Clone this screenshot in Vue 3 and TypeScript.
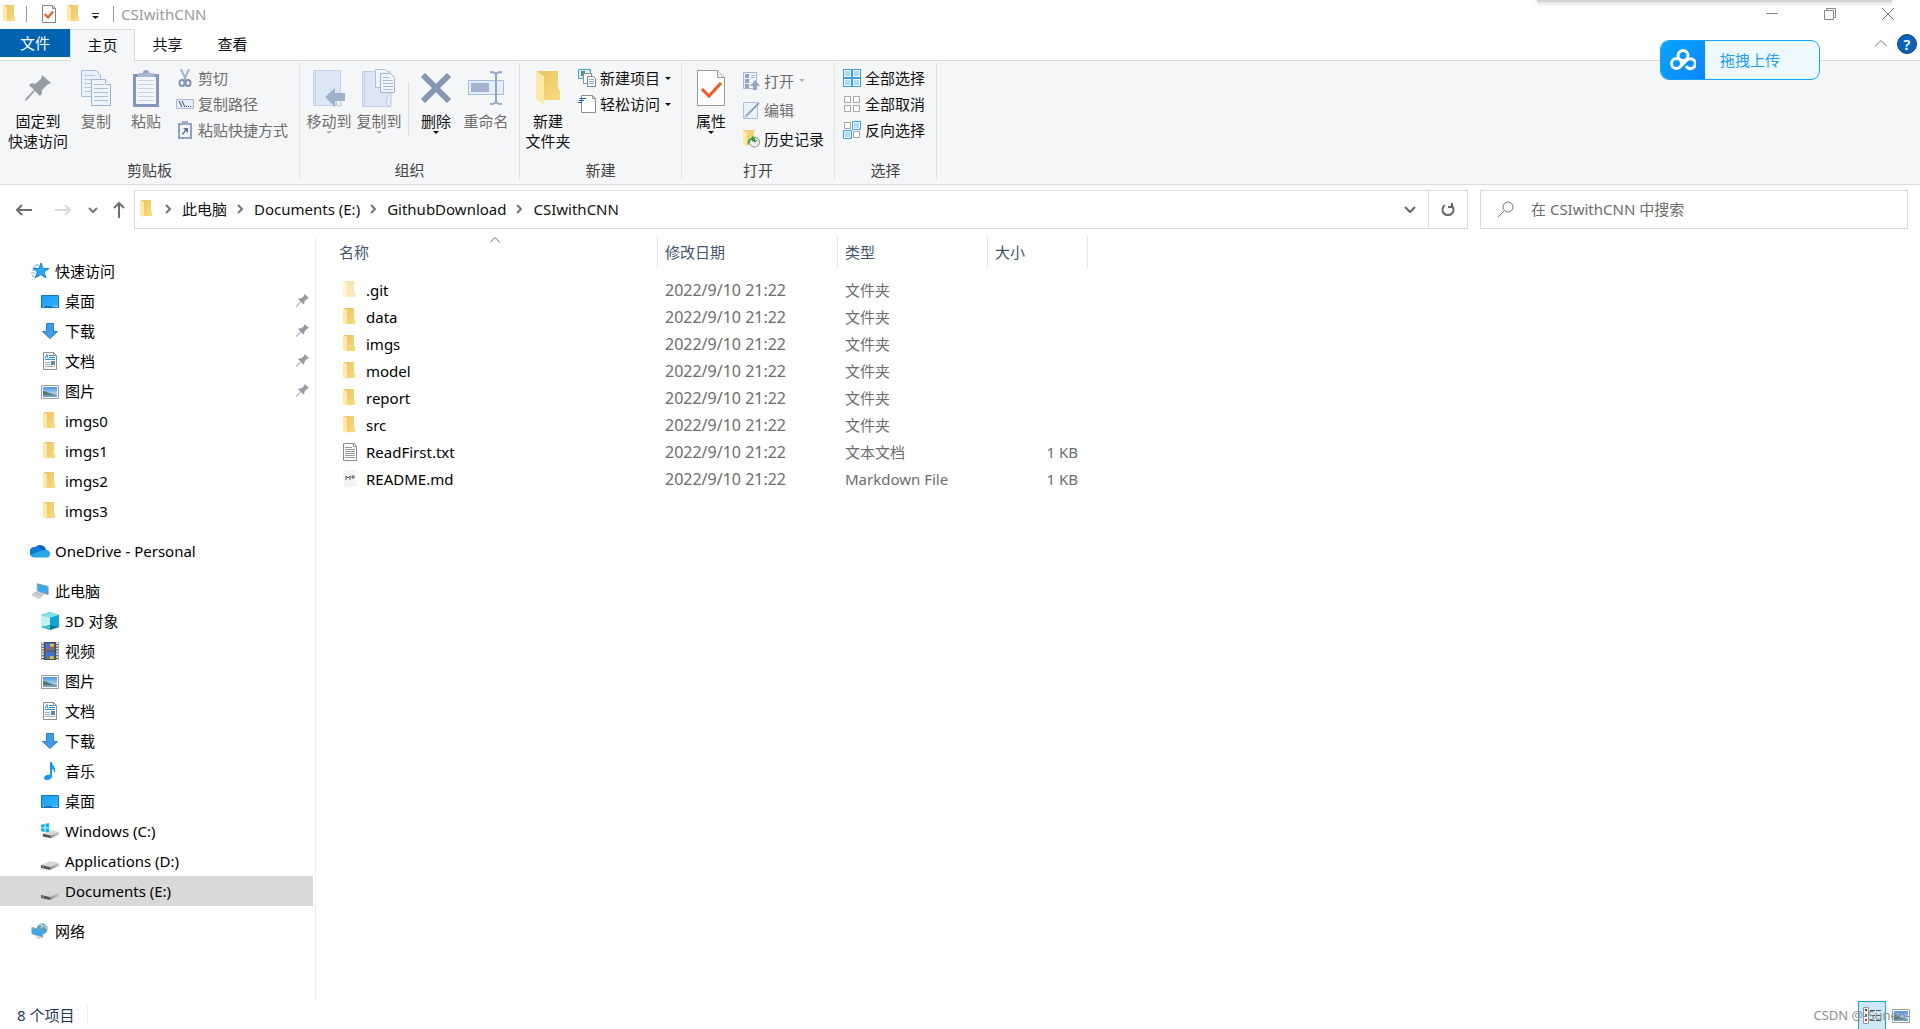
<script setup lang="ts">
import { ref } from 'vue'

interface NavItem {
  label: string
  icon: string
  root?: boolean
  gap?: boolean
  pinned?: boolean
  selected?: boolean
}
interface FileRow {
  name: string
  icon: string
  type: string
  size: string
  hidden?: boolean
}

const tabs = ['文件', '主页', '共享', '查看']
const crumbs = ['此电脑', 'Documents (E:)', 'GithubDownload', 'CSIwithCNN']
const query = ref('')
const modified = '2022/9/10 21:22'

const nav: NavItem[] = [
  { label: '快速访问', icon: 'star', root: true },
  { label: '桌面', icon: 'desktop', pinned: true },
  { label: '下载', icon: 'download', pinned: true },
  { label: '文档', icon: 'document', pinned: true },
  { label: '图片', icon: 'picture', pinned: true },
  { label: 'imgs0', icon: 'folder' },
  { label: 'imgs1', icon: 'folder' },
  { label: 'imgs2', icon: 'folder' },
  { label: 'imgs3', icon: 'folder' },
  { label: 'OneDrive - Personal', icon: 'onedrive', root: true, gap: true },
  { label: '此电脑', icon: 'computer', root: true, gap: true },
  { label: '3D 对象', icon: 'cube' },
  { label: '视频', icon: 'video' },
  { label: '图片', icon: 'picture' },
  { label: '文档', icon: 'document' },
  { label: '下载', icon: 'download' },
  { label: '音乐', icon: 'music' },
  { label: '桌面', icon: 'desktop' },
  { label: 'Windows (C:)', icon: 'windrive' },
  { label: 'Applications (D:)', icon: 'drive' },
  { label: 'Documents (E:)', icon: 'drive', selected: true },
  { label: '网络', icon: 'network', root: true, gap: true },
]

const files: FileRow[] = [
  { name: '.git', icon: 'folder', type: '文件夹', size: '', hidden: true },
  { name: 'data', icon: 'folder', type: '文件夹', size: '' },
  { name: 'imgs', icon: 'folder', type: '文件夹', size: '' },
  { name: 'model', icon: 'folder', type: '文件夹', size: '' },
  { name: 'report', icon: 'folder', type: '文件夹', size: '' },
  { name: 'src', icon: 'folder', type: '文件夹', size: '' },
  { name: 'ReadFirst.txt', icon: 'text', type: '文本文档', size: '1 KB' },
  { name: 'README.md', icon: 'markdown', type: 'Markdown File', size: '1 KB' },
]
</script>

<template>
  <div class="window">
    <svg class="sprite" aria-hidden="true">
      <defs>
        <linearGradient id="g-fold" x1="0" y1="0" x2="1" y2="1">
          <stop offset="0" stop-color="#e9c261" /><stop offset="1" stop-color="#fbdc7f" />
        </linearGradient>
        <linearGradient id="g-sky" x1="0" y1="0" x2="0" y2="1">
          <stop offset="0" stop-color="#4b94e6" /><stop offset="1" stop-color="#d8eefa" />
        </linearGradient>
        <linearGradient id="g-drive" x1="0" y1="0" x2="1" y2="0">
          <stop offset="0" stop-color="#8d8e90" /><stop offset="1" stop-color="#c9cacc" />
        </linearGradient>
        <linearGradient id="g-screen" x1="0" y1="0" x2="1" y2="1">
          <stop offset="0" stop-color="#1b9bf5" /><stop offset="1" stop-color="#35b4ff" />
        </linearGradient>
      </defs>
      <symbol id="i-folder" viewBox="0 0 18 18">
        <path d="M3 0h10v11l1 1v4H5z" fill="url(#g-fold)" />
        <path d="M2 0l4 2v15L2 15z" fill="#ffe9a6" />
      </symbol>
      <symbol id="i-bigfolder" viewBox="0 0 24 34">
        <path d="M1 0h21v17l2 3v9H8z" fill="url(#g-fold)" />
        <path d="M0 0l8 5v29l-8-6z" fill="#ffe9a6" />
      </symbol>
      <symbol id="i-star" viewBox="0 0 18 18">
        <path d="M10 1l2 5.500h6l-5 3.500 2 6-5-3.500L4 16l2.500-6L2 6.500h6z" fill="#2aa4f4" stroke="#1684cf" />
        <path d="M4 3h4M2 5h3M1 8h4M0 11h4M1 14h2" stroke="#63b7ee" />
      </symbol>
      <symbol id="i-desktop" viewBox="0 0 18 18">
        <path d="M.500 3.500h17v12H.500z" fill="url(#g-screen)" stroke="#0f76c4" />
        <path d="M1 14.500h10" stroke="#1678bd" /><path d="M2 14.500h1M13 14.500h1M15 14.500h1" stroke="#fff" />
      </symbol>
      <symbol id="i-download" viewBox="0 0 18 18">
        <path d="M5.500 1.500h7v8h4L9 16.500 1.500 9.500h4z" fill="#3d9bea" stroke="#2a7fcb" />
      </symbol>
      <symbol id="i-document" viewBox="0 0 18 18">
        <path d="M2.500.500h10l3 3v14h-13z" fill="#fdfdfd" stroke="#8b8f92" />
        <path d="M12.500.500v3h3" fill="none" stroke="#8b8f92" />
        <path d="M4 6.500l2-4 1 4M8 3.500h4M8 5.500h6M4 7.500h10" fill="none" stroke="#2b93d6" />
        <path d="M4 10.500h5M4 12.500h5M4 14.500h10" stroke="#a4abb0" /><path d="M10 9h4v4h-4z" fill="#4f8fb6" />
      </symbol>
      <symbol id="i-picture" viewBox="0 0 18 18">
        <path d="M.500 3.500h17v13H.500z" fill="#fff" stroke="#9a9ea2" />
        <path d="M2 5h14v10H2z" fill="url(#g-sky)" />
        <path d="M2 9c4 0 6 3 14 4v1H2z" fill="#4d7d74" /><path d="M2 13h14v2H2z" fill="#6f9fc0" />
      </symbol>
      <symbol id="i-onedrive" viewBox="0 0 20 18">
        <path d="M5 6a6 6 0 0 1 11 2l-5 5z" fill="#0364b8" />
        <path d="M5 5a6 6 0 0 1 5 1l7 5-6 4H4A5 5 0 0 1 5 5z" fill="#0f78d4" />
        <path d="M15 8a4 4 0 0 1 5 4c0 2-1 3.500-3 3.500H4c-2 0-3-1-3.500-2.500L10 9z" fill="#28a8ea" />
      </symbol>
      <symbol id="i-computer" viewBox="0 0 20 18">
        <path d="M7 1l12 3v9L7 9z" fill="#3ba9f0" stroke="#8a949b" />
        <path d="M5 10l9 3-2 1-8-3zM1 13l4-1 7 3-4 2z" fill="#d3d8dc" stroke="#b4bac0" />
      </symbol>
      <symbol id="i-cube" viewBox="0 0 18 18">
        <path d="M9 0l9 3v12l-9 3-9-3V3z" fill="#1ba9c9" />
        <path d="M9 0l9 3-9 3-9-3z" fill="#7fe0e8" /><path d="M0 3l9 3v7l-9 2z" fill="#c3f1f0" />
        <path d="M9 6l9-3v12l-9-2z" fill="#12a5d8" /><path d="M0 15l9-2v5z" fill="#36c2cf" /><path d="M18 15l-9-2v5z" fill="#067a96" />
      </symbol>
      <symbol id="i-video" viewBox="0 0 18 19">
        <path d="M0 0h18v19H0z" fill="#4b4b4b" />
        <path d="M1.500 0v19M16.500 0v19" stroke="#e6e6e6" stroke-width="2" stroke-dasharray="2 1" />
        <path d="M4 1h10v8H4zM4 10h10v8H4z" fill="#3f74d0" />
        <path d="M9 2h4v3H9zM9 15h4v3H9z" fill="#e6c62e" /><path d="M4 7h4v2H4zM9 5h4v2H9z" fill="#d14a34" />
        <path d="M9 7h4v2H9zM6 16h3v2H6z" fill="#3a9a53" />
      </symbol>
      <symbol id="i-music" viewBox="0 0 18 18">
        <path d="M9 0h2c0 4 4 4 3 10l-1 1c0-3-1-4-2-4v7c0 3-3 4-5 4s-3-1-3-2c0-2 3-4 6-3z" fill="#109bf0" />
      </symbol>
      <symbol id="i-drive" viewBox="0 0 18 18">
        <path d="M0 13l9-4 9 2-9 4z" fill="#d6d7d9" />
        <path d="M0 13l9 2v3l-9-2z" fill="#555" /><path d="M9 15l9-4v3l-9 4z" fill="url(#g-drive)" />
        <path d="M1 14l2 1v1l-2-1z" fill="#5fbf78" />
      </symbol>
      <symbol id="i-windrive" viewBox="0 0 20 18">
        <path d="M2 12l9-4 9 2-9 4z" fill="#d6d7d9" />
        <path d="M2 12l9 2v3l-9-2z" fill="#555" /><path d="M11 14l9-4v3l-9 4z" fill="url(#g-drive)" />
        <path d="M0 2l4-1v4H0zM5 1l4-1v5H5zM0 6h4v4l-4-1zM5 6h4v4H5z" fill="#14b1ef" />
      </symbol>
      <symbol id="i-network" viewBox="0 0 20 18">
        <circle cx="12.500" cy="6.500" r="6" fill="#5a9fb9" />
        <path d="M9 3c2-2 3-1 4 0s-2 2-2 3M15 2c2 2 0 3 3 5" fill="none" stroke="#a5d0db" stroke-width="2" />
        <path d="M1 5l12 3v8L1 12z" fill="#39a8ee" stroke="#8fa3af" />
        <path d="M6 15l6 2-3 1-4-2z" fill="#c4cace" />
      </symbol>
      <symbol id="i-text" viewBox="0 0 18 18">
        <path d="M2.500.500h11l2 3v14h-13z" fill="#fff" stroke="#8d8d8d" /><path d="M12.500.500v3h3" fill="none" stroke="#8d8d8d" />
        <path d="M4 4.500h7M4 6.500h10M4 8.500h10M4 10.500h10M4 12.500h10M4 14.500h10" stroke="#9a9a9a" />
      </symbol>
      <symbol id="i-markdown" viewBox="0 0 18 18">
        <path d="M2 1l12-1 2 16-13 2z" fill="#f3f3f3" />
        <path d="M5 10V6l2 2 2-2v4M12 5v4M10 7h4" fill="none" stroke="#555" />
      </symbol>
      <symbol id="i-pin" viewBox="0 0 26 26">
        <path d="M17 0l9 8-4 2-5 5c0 3 0 4-2 6l-5-5-8 9-2 1 1-3 8-8-5-5c2-2 4-2 6-1l6-5z" fill="#949da4" />
      </symbol>
      <symbol id="i-page" viewBox="0 0 30 37">
        <path d="M.500.500h15l4 5v21H.500z" fill="#e9f1fb" stroke="#a9bcd8" />
        <path d="M3 5.500h11M3 9.500h14M3 13.500h14M3 17.500h14M3 21.500h14" stroke="#b7c8e0" />
        <path d="M10.500 9.500h14l5 5v21h-19z" fill="#eef4fc" stroke="#9fb3d2" /><path d="M24.500 9.500v5h5" fill="#fff" stroke="#9fb3d2" />
        <path d="M13 14.500h10M13 18.500h14M13 22.500h14M13 26.500h14M13 30.500h14" stroke="#a9bcd8" />
      </symbol>
      <symbol id="i-paste" viewBox="0 0 26 37">
        <path d="M0 4h26v33H0z" fill="#8396bb" /><path d="M3 7h20v27H3z" fill="#f2f7fd" />
        <circle cx="13" cy="3" r="3" fill="#8fa2c4" /><path d="M6 3h14l2 4H4z" fill="#a8b8d2" />
        <path d="M5 10.500h16M5 14.500h16M5 18.500h16M5 22.500h16M5 26.500h16M5 30.500h16" stroke="#c6d4e8" />
      </symbol>
      <symbol id="i-cut" viewBox="0 0 18 18">
        <path d="M5 0l5 11M13 0L8 11" stroke="#a3b3cc" stroke-width="2" />
        <ellipse cx="6" cy="14" rx="2.500" ry="3" fill="none" stroke="#7f93b8" stroke-width="2" />
        <ellipse cx="12" cy="14" rx="2.500" ry="3" fill="none" stroke="#7f93b8" stroke-width="2" />
      </symbol>
      <symbol id="i-path" viewBox="0 0 18 18">
        <path d="M.500 4.500h17v9H.500z" fill="#e3edf8" stroke="#a9bad3" />
        <path d="M3 6l3 6M6 6l3 6M10 11.500h1M12 11.500h1M14 11.500h1" stroke="#3d4f73" />
      </symbol>
      <symbol id="i-shortcut" viewBox="0 0 18 18">
        <path d="M2 2h14v16H2z" fill="#8fa2c4" /><path d="M4 4h10v12H4z" fill="#f0f5fb" /><path d="M6 0h6v4H6z" fill="#9aabca" />
        <path d="M7 7h5v5l-2-2-3 4-1-1 3-4z" fill="#5672a3" />
      </symbol>
      <symbol id="i-moveto" viewBox="0 0 32 37">
        <path d="M.500.500h27v35H.500z" fill="#dde6f4" stroke="#c3d1e6" /><path d="M2.500 1v35" stroke="#c3d1e6" /><path d="M25 28c-2 2-2 8 0 8h3V25z" fill="#e9f0fa" stroke="#b7c7df" />
        <path d="M12 27l10-9v5h10v8H22v6z" fill="#9fb0cc" />
      </symbol>
      <symbol id="i-copyto" viewBox="0 0 34 38">
        <path d="M.500 2.500h28v35H.500z" fill="#dde6f4" stroke="#c3d1e6" /><path d="M2.500 3v34" stroke="#c3d1e6" /><path d="M26 27c-2 2-2 10 0 10h3V24z" fill="#e9f0fa" stroke="#b7c7df" />
        <path d="M13.500.500h10l4 4v14h-14z" fill="#eef4fb" stroke="#b3c3dc" />
        <path d="M18.500 4.500h10l4 4v15h-14z" fill="#f1f6fc" stroke="#a0b3d0" />
        <path d="M21 8.500h6M21 11.500h10M21 14.500h10M21 17.500h10M21 20.500h10" stroke="#a9bad5" />
      </symbol>
      <symbol id="i-delete" viewBox="0 0 32 32">
        <path d="M3 3l26 26M29 3L3 29" stroke="#8495b5" stroke-width="6" />
      </symbol>
      <symbol id="i-rename" viewBox="0 0 36 34">
        <path d="M.500 9.500h35v14H.500z" fill="#e6eefa" stroke="#a9bcda" /><path d="M3 12h18v9H3z" fill="#a3b3d0" />
        <path d="M22 1c4 0 6 1 6 3 0-2 2-3 6-3M28 3v28M22 33c4 0 6-1 6-3 0 2 2 3 6 3" fill="none" stroke="#93a5c6" stroke-width="2" />
      </symbol>
      <symbol id="i-newitem" viewBox="0 0 18 18">
        <path d="M.500.500h12v9H.500z" fill="#d9f0fa" stroke="#4aa2bf" /><path d="M3 2h4v5H3z" fill="#4b8b88" />
        <path d="M5.500 4.500h8v10h-8z" fill="#f7f7f7" stroke="#8b8b8b" />
        <path d="M9.500 7.500h6l2 2v8h-8z" fill="#fff" stroke="#7a8794" /><path d="M11 10.500h5M11 12.500h5M11 14.500h5" stroke="#7fb0e6" />
      </symbol>
      <symbol id="i-easy" viewBox="0 0 18 18">
        <path d="M3.500.500h11l3 3v14h-14z" fill="#fff" stroke="#8e8e8e" /><path d="M14.500.500v3h3" fill="none" stroke="#8e8e8e" />
        <path d="M2 3.500h6M1 5.500h5M0 7.500h4" stroke="#1464b4" />
      </symbol>
      <symbol id="i-props" viewBox="0 0 28 36">
        <path d="M.500.500h20l7 7v28H.500z" fill="#fdfdfd" stroke="#9a9a9a" /><path d="M20.500.500v7h7" fill="#ececec" stroke="#9a9a9a" />
        <path d="M5 19l7 7 12-13" fill="none" stroke="#f0591b" stroke-width="3" />
      </symbol>
      <symbol id="i-miniprops" viewBox="0 0 18 18">
        <path d="M2.500.500h10l3 3v14h-13z" fill="#fdfdfd" stroke="#848484" /><path d="M12.500.500v3h3" fill="none" stroke="#848484" />
        <path d="M4.500 9l3.500 3.500 5-6" fill="none" stroke="#f0591b" stroke-width="2" />
      </symbol>
      <symbol id="i-open" viewBox="0 0 18 18">
        <path d="M1.500.500h13v16h-13z" fill="#eef4fb" stroke="#a6b8d4" />
        <path d="M3 2h4v4H3zM3 7h4v4H3zM3 12h4v4H3z" fill="#8fa4c8" /><path d="M9 3.500h4M9 5.500h4" stroke="#a6b8d4" />
        <path d="M13 8l5 6h-3v4h-4v-4H8z" fill="#93a6c7" />
      </symbol>
      <symbol id="i-edit" viewBox="0 0 18 18">
        <path d="M1.500 1.500h14v16h-14z" fill="#eaf1fa" stroke="#b0c0d9" /><path d="M4 15L17 2" stroke="#8ea3c5" stroke-width="2" /><path d="M2 17l1-4 3 3z" fill="#c1cde0" />
      </symbol>
      <symbol id="i-history" viewBox="0 0 18 18">
        <path d="M1 0h11v15H4z" fill="#f3d172" /><path d="M1 0l4 3v14l-4-2z" fill="#ffe9a6" />
        <circle cx="12.500" cy="12" r="5" fill="#efefef" stroke="#8b8b8b" /><path d="M12.500 9v3l3-2" fill="none" stroke="#555" />
        <path d="M6 16c-1-5 0-7 4-8V6l4 3-4 3v-2c-3 0-3 2-4 6z" fill="#2f9e35" />
      </symbol>
      <symbol id="i-selall" viewBox="0 0 18 18">
        <path d="M0 0h18v18H0z" fill="#3e9fe2" />
        <path d="M1 1h7v7H1zM10 1h7v7h-7zM1 10h7v7H1zM10 10h7v7h-7z" fill="#e6f5fe" />
        <path d="M2 2h5v5H2zM11 2h5v5h-5zM2 11h5v5H2zM11 11h5v5h-5z" fill="#aaddfb" />
      </symbol>
      <symbol id="i-selnone" viewBox="0 0 18 18">
        <path d="M1.500 1.500h6v6h-6zM10.500 1.500h6v6h-6zM1.500 10.500h6v6h-6zM10.500 10.500h6v6h-6z" fill="#fff" stroke="#a3a3a3" />
      </symbol>
      <symbol id="i-selinv" viewBox="0 0 18 18">
        <path d="M1.500 1.500h6v6h-6zM10.500 10.500h6v6h-6z" fill="#fff" stroke="#a3a3a3" />
        <path d="M9.500.500h8v8h-8zM.500 9.500h8v8h-8z" fill="#e6f5fe" stroke="#3e9fe2" />
        <path d="M11 2h5v5h-5zM2 11h5v5H2z" fill="#aaddfb" />
      </symbol>
      <symbol id="i-caret" viewBox="0 0 6 3"><path d="M0 0h6L3 3z" fill="currentColor" /></symbol>
      <symbol id="i-chev" viewBox="0 0 6 10"><path d="M1 1l4 4-4 4" fill="none" stroke="#777" stroke-width="2" /></symbol>
    </svg>

    <header class="title-bar">
      <svg class="ico"><use href="#i-folder" /></svg>
      <span class="bar"></span>
      <button class="quick" aria-label="属性"><svg class="ico"><use href="#i-miniprops" /></svg></button>
      <button class="quick" aria-label="新建文件夹"><svg class="ico"><use href="#i-folder" /></svg></button>
      <button class="quick more" aria-label="自定义快速访问工具栏">
        <svg width="7" height="6" viewBox="0 0 7 6"><path d="M0 0h7v1H0zM0 3h7L3.500 6z" fill="#222" /></svg>
      </button>
      <span class="bar"></span>
      <span class="title">CSIwithCNN</span>
      <div class="window-buttons">
        <button aria-label="最小化"><svg width="12" height="12"><path d="M0 5.500h12" stroke="#888" /></svg></button>
        <button aria-label="还原"><svg width="12" height="12"><path d="M.500 2.500h9v9h-9zM2.500 2V.500h9v9H10" fill="none" stroke="#888" /></svg></button>
        <button aria-label="关闭"><svg width="12" height="12"><path d="M0 0l12 12M12 0L0 12" stroke="#777" /></svg></button>
      </div>
      <div class="edge-shadow"></div>
    </header>

    <nav class="tabs">
      <button v-for="(t, i) in tabs" :key="t" :class="{ file: i === 0, active: i === 1 }">{{ t }}</button>
      <div class="tab-tools">
        <button aria-label="折叠功能区"><svg width="12" height="7"><path d="M0 6.500l6-6 6 6" fill="none" stroke="#777" /></svg></button>
        <button class="help" aria-label="帮助">?</button>
      </div>
    </nav>

    <section class="ribbon">
      <div class="group clipboard">
        <div class="body">
          <button class="big pin"><span class="art"><svg width="26" height="26"><use href="#i-pin" /></svg></span><span>固定到<br />快速访问</span></button>
          <button class="big off"><span class="art"><svg width="30" height="37"><use href="#i-page" /></svg></span><span>复制</span></button>
          <button class="big off"><span class="art"><svg width="26" height="37"><use href="#i-paste" /></svg></span><span>粘贴</span></button>
          <div class="stack">
            <button class="off"><svg class="ico"><use href="#i-cut" /></svg>剪切</button>
            <button class="off"><svg class="ico"><use href="#i-path" /></svg>复制路径</button>
            <button class="off"><svg class="ico"><use href="#i-shortcut" /></svg>粘贴快捷方式</button>
          </div>
        </div>
        <div class="caption">剪贴板</div>
      </div>
      <div class="group organize">
        <div class="body">
          <button class="big off"><span class="art"><svg width="32" height="37"><use href="#i-moveto" /></svg></span><span>移动到</span><svg class="caret"><use href="#i-caret" /></svg></button>
          <button class="big off"><span class="art"><svg width="34" height="38"><use href="#i-copyto" /></svg></span><span>复制到</span><svg class="caret"><use href="#i-caret" /></svg></button>
          <span class="split"></span>
          <button class="big"><span class="art"><svg width="32" height="32"><use href="#i-delete" /></svg></span><span>删除</span><svg class="caret"><use href="#i-caret" /></svg></button>
          <button class="big off"><span class="art"><svg width="36" height="34"><use href="#i-rename" /></svg></span><span>重命名</span></button>
        </div>
        <div class="caption">组织</div>
      </div>
      <div class="group create">
        <div class="body">
          <button class="big"><span class="art"><svg width="24" height="34"><use href="#i-bigfolder" /></svg></span><span>新建<br />文件夹</span></button>
          <div class="stack">
            <button><svg class="ico"><use href="#i-newitem" /></svg>新建项目<svg class="caret"><use href="#i-caret" /></svg></button>
            <button><svg class="ico"><use href="#i-easy" /></svg>轻松访问<svg class="caret"><use href="#i-caret" /></svg></button>
          </div>
        </div>
        <div class="caption">新建</div>
      </div>
      <div class="group open">
        <div class="body">
          <button class="big"><span class="art"><svg width="28" height="36"><use href="#i-props" /></svg></span><span>属性</span><svg class="caret"><use href="#i-caret" /></svg></button>
          <div class="stack loose">
            <button class="off"><svg class="ico"><use href="#i-open" /></svg>打开<svg class="caret"><use href="#i-caret" /></svg></button>
            <button class="off"><svg class="ico"><use href="#i-edit" /></svg>编辑</button>
            <button><svg class="ico"><use href="#i-history" /></svg>历史记录</button>
          </div>
        </div>
        <div class="caption">打开</div>
      </div>
      <div class="group select">
        <div class="body">
          <div class="stack">
            <button><svg class="ico"><use href="#i-selall" /></svg>全部选择</button>
            <button><svg class="ico"><use href="#i-selnone" /></svg>全部取消</button>
            <button><svg class="ico"><use href="#i-selinv" /></svg>反向选择</button>
          </div>
        </div>
        <div class="caption">选择</div>
      </div>
    </section>

    <div class="address-row">
      <div class="history-buttons">
        <button aria-label="后退"><svg width="16" height="12"><path d="M1 6h15M6 1L1 6l5 5" fill="none" stroke="#6d6d6d" stroke-width="2" /></svg></button>
        <button aria-label="前进"><svg width="16" height="12"><path d="M0 6h15M10 1l5 5-5 5" fill="none" stroke="#dadada" stroke-width="2" /></svg></button>
        <button class="recent" aria-label="最近位置"><svg width="10" height="6"><path d="M1 1l4 4 4-4" fill="none" stroke="#777" stroke-width="2" /></svg></button>
        <button class="up" aria-label="上移"><svg width="12" height="16"><path d="M6 16V1M1 6l5-5 5 5" fill="none" stroke="#6d6d6d" stroke-width="2" /></svg></button>
      </div>
      <div class="address">
        <svg class="ico"><use href="#i-folder" /></svg>
        <template v-for="c in crumbs" :key="c">
          <svg class="chev"><use href="#i-chev" /></svg>
          <a href="#">{{ c }}</a>
        </template>
        <button class="drop" aria-label="以前的位置"><svg width="12" height="7"><path d="M1 1l5 5 5-5" fill="none" stroke="#666" stroke-width="2" /></svg></button>
        <button class="refresh" aria-label="刷新"><svg width="14" height="15" viewBox="0 0 14 15"><path d="M4 3a5.500 5.500 0 1 0 6 0M11 1v4H7" fill="none" stroke="#666" stroke-width="2" /></svg></button>
      </div>
      <label class="search">
        <svg width="16" height="16"><circle cx="10" cy="6" r="5" fill="none" stroke="#777" /><path d="M6.500 9.500L0 16" stroke="#777" /></svg>
        <input v-model="query" type="text" aria-label="搜索" placeholder="在 CSIwithCNN 中搜索" />
      </label>
    </div>

    <main class="content">
      <ul class="tree">
        <li v-for="(n, i) in nav" :key="i" :class="{ root: n.root, gap: n.gap, selected: n.selected }">
          <a href="#">
            <svg class="ico" :class="{ wide: n.icon === 'onedrive' }"><use :href="'#i-' + n.icon" /></svg><span>{{ n.label }}</span>
            <svg v-if="n.pinned" class="pinned"><use href="#i-pin" /></svg>
          </a>
        </li>
      </ul>
      <div class="files">
        <table>
          <colgroup><col class="c-name" /><col class="c-date" /><col class="c-type" /><col class="c-size" /></colgroup>
          <thead>
            <tr>
              <th>名称<svg class="sort" width="10" height="6"><path d="M0 5.500l5-5 5 5" fill="none" stroke="#666" /></svg></th>
              <th>修改日期</th><th>类型</th><th>大小</th>
            </tr>
          </thead>
          <tbody>
            <tr v-for="f in files" :key="f.name">
              <td class="name"><div><svg class="ico" :class="{ faded: f.hidden }"><use :href="'#i-' + f.icon" /></svg>{{ f.name }}</div></td>
              <td class="date">{{ modified }}</td><td>{{ f.type }}</td><td class="size">{{ f.size }}</td>
            </tr>
          </tbody>
        </table>
      </div>
    </main>

    <footer class="status">
      <span class="count">8 个项目</span>
      <div class="views">
        <button class="current" aria-label="详细信息">
          <svg width="18" height="17"><path d="M.500.500h5v16h-5z" fill="#fff" stroke="#999" /><path d="M2 2h2v2H2z" fill="#444" /><path d="M2 7h2v2H2z" fill="#3a7f4a" /><path d="M2 12h2v2H2z" fill="#c43b23" /><path d="M7 3.500h5M13 3.500h5M7 8.500h5M13 8.500h5M7 13.500h5M13 13.500h5" stroke="#555" /></svg>
        </button>
        <button aria-label="大图标"><svg class="ico"><use href="#i-picture" /></svg></button>
      </div>
      <span class="watermark">CSDN @-Suneo-</span>
    </footer>

    <button class="upload">
      <span class="cloud"><svg width="26" height="22" viewBox="0 0 26 22"><g fill="none" stroke="#fff" stroke-width="3"><circle cx="13" cy="6.500" r="5" /><circle cx="6.500" cy="14.500" r="5" /><path d="M10 18l7-7a5 5 0 1 1-1 6" /></g></svg></span>
      <span class="upload-text">拖拽上传</span>
    </button>
  </div>
</template>

<style>
body {
  margin: 0;
  background: #fff;
}
</style>

<style scoped>
.window {
  position: relative;
  display: flex;
  flex-direction: column;
  min-height: 100vh;
  overflow: hidden;
  box-sizing: border-box;
  background: #fff;
  color: #111;
  font: 15px/20px "Noto Sans", "Noto Sans CJK SC", sans-serif;
}
.sprite {
  position: absolute;
  width: 0;
  height: 0;
}
button {
  display: flex;
  align-items: center;
  padding: 0;
  border: 0;
  background: none;
  color: inherit;
  font: inherit;
}
a {
  color: inherit;
  text-decoration: none;
}
svg {
  display: block;
  flex: none;
}
.ico {
  width: 18px;
  height: 18px;
}
.chev {
  width: 6px;
  height: 10px;
}
.caret {
  width: 6px;
  height: 3px;
}

.title-bar {
  display: flex;
  align-items: center;
  height: 29px;
  box-sizing: border-box;
  padding: 0 0 1px 1px;
}
.bar {
  width: 1px;
  height: 16px;
  margin-left: 7px;
  background: #999;
}
.quick {
  margin-left: 7px;
}
.bar + .quick {
  margin-left: 13px;
}
.quick.more {
  margin: 4px 7px 0 9px;
}
.title {
  margin-left: 7px;
  color: #999;
}
.window-buttons {
  display: flex;
  margin-left: auto;
  padding-right: 3px;
}
.window-buttons button {
  width: 58px;
  height: 28px;
  justify-content: center;
}
.edge-shadow {
  position: absolute;
  top: 0;
  right: 28px;
  width: 355px;
  height: 2px;
  background: #d2d2d2;
  box-shadow: 0 1px 4px #bbb;
}

.tabs {
  display: flex;
  align-items: stretch;
  height: 32px;
  box-sizing: border-box;
  border-bottom: 1px solid #dadbdc;
}
.tabs > button {
  width: 65px;
  justify-content: center;
  padding-bottom: 2px;
}
.tabs > .file {
  width: 70px;
  height: 28px;
  padding: 0;
  background: #0063b1;
  color: #fff;
}
.tabs > .active {
  height: 32px;
  box-sizing: border-box;
  border: 1px solid #dadbdc;
  border-bottom: 0;
  background: #f5f6f7;
}
.tab-tools {
  display: flex;
  align-items: center;
  gap: 10px;
  margin-left: auto;
  padding: 0 3px 2px 0;
}
.help {
  width: 20px;
  height: 20px;
  justify-content: center;
  border: 1px solid #17436f;
  border-radius: 50%;
  background: #0a62c0;
  color: #fff;
  font-weight: 600;
}

.ribbon {
  display: flex;
  height: 124px;
  box-sizing: border-box;
  border-bottom: 1px solid #dadbdc;
  padding: 2px 0 4px;
  background: #f5f6f7;
}
.group {
  display: flex;
  flex-direction: column;
  border-right: 1px solid #e2e3e4;
}
.body {
  display: flex;
  flex: 1;
  align-items: flex-start;
}
.clipboard .body {
  padding: 0 11px 0 5px;
}
.organize .body {
  padding: 0 8px 0 4px;
}
.create .body {
  padding: 0 10px 0 3px;
}
.open .body {
  padding: 0 10px 0 4px;
}
.select .body {
  padding: 0 11px 0 3px;
}
.caption {
  height: 20px;
  color: #444;
  text-align: center;
}
.big {
  flex-direction: column;
  width: 50px;
  padding-top: 4px;
  white-space: nowrap;
}
.big.pin {
  width: 66px;
}
.art {
  display: flex;
  align-items: center;
  height: 42px;
  margin-bottom: 2px;
}
.off {
  color: #6d6d6d;
}
.off .caret {
  color: #b5b5b5;
}
.stack {
  padding: 2px 0 0 5px;
}
.stack button {
  height: 26px;
  gap: 4px;
}
.stack .caret {
  margin-left: 1px;
}
.stack.loose {
  padding: 3px 0 0 6px;
}
.loose button {
  height: 29px;
}
.split {
  width: 1px;
  height: 55px;
  margin: 19px 2px 0 4px;
  background: #dcdddf;
}

.address-row {
  display: flex;
  padding: 5px 12px 7px 0;
}
.history-buttons {
  display: flex;
  align-items: center;
  width: 134px;
}
.history-buttons button {
  margin-left: 16px;
}
.history-buttons button + button {
  margin-left: 23px;
}
.history-buttons .recent.recent {
  margin-left: 17px;
}
.history-buttons .up.up {
  margin-left: 15px;
}
.address {
  display: flex;
  flex: 1;
  align-items: center;
  height: 39px;
  box-sizing: border-box;
  border: 1px solid #d9d9d9;
  padding: 0 0 1px 3px;
}
.address .ico {
  margin-right: -2px;
}
.address .chev {
  margin: 0 11px 0 10px;
}
.address .ico + .chev {
  margin-left: 11px;
}
.drop {
  width: 36px;
  height: 37px;
  justify-content: center;
  margin-left: auto;
}
.refresh {
  width: 39px;
  height: 37px;
  justify-content: center;
  border-left: 1px solid #d9d9d9;
}
.search {
  display: flex;
  align-items: center;
  gap: 17px;
  width: 428px;
  height: 39px;
  box-sizing: border-box;
  margin-left: 12px;
  border: 1px solid #d9d9d9;
  padding: 0 0 1px 17px;
}
.search input {
  flex: 1;
  min-width: 0;
  border: 0;
  padding: 0;
  outline: 0;
  background: none;
  font: inherit;
}
.search input::placeholder {
  color: #6d6d6d;
  opacity: 1;
}

.content {
  display: flex;
  flex: 1;
}
.tree {
  width: 315px;
  margin: 0;
  border-right: 1px solid #f0f0f0;
  padding: 20px 0 0;
  list-style: none;
}
.tree li {
  margin-right: 2px;
}
.tree a {
  display: flex;
  align-items: center;
  height: 30px;
  box-sizing: border-box;
  gap: 6px;
  padding: 0 4px 1px 41px;
  color: #000;
}
.tree .root a {
  padding-left: 31px;
}
.tree .wide {
  width: 20px;
  margin: 0 -1px;
}
.tree .gap {
  margin-top: 10px;
}
.tree .selected {
  background: #d9d9d9;
}
.pinned {
  width: 13px;
  height: 13px;
  margin-left: auto;
}
.files {
  flex: 1;
}
table {
  width: 772px;
  table-layout: fixed;
  border-collapse: separate;
  border-spacing: 0;
}
.c-name {
  width: 342px;
}
.c-date {
  width: 180px;
}
.c-type {
  width: 150px;
}
.c-size {
  width: 100px;
}
th {
  position: relative;
  height: 32px;
  box-sizing: border-box;
  border-right: 1px solid #e5e5e5;
  padding: 0 0 0 7px;
  color: #44546e;
  font-weight: 400;
  text-align: left;
}
th:first-child {
  padding-left: 23px;
}
.sort {
  position: absolute;
  top: 1px;
  left: 51%;
}
tbody::before {
  display: block;
  height: 8px;
  content: "";
}
td {
  height: 27px;
  padding: 0 0 0 7px;
  color: #6d6d6d;
}
.date {
  font-size: 16px;
}
.name {
  padding-left: 25px;
  color: #000;
}
.name div {
  display: flex;
  align-items: center;
  gap: 7px;
}
.faded {
  opacity: 0.5;
}
.size {
  padding-right: 10px;
  text-align: right;
}

.status {
  position: relative;
  display: flex;
  align-items: center;
  height: 29px;
  padding: 0 10px 0 17px;
}
.count {
  border-right: 1px solid #eee;
  padding-right: 13px;
  color: #1e395b;
}
.views {
  display: flex;
  align-items: center;
  gap: 6px;
  margin-left: auto;
}
.current {
  width: 28px;
  height: 28px;
  box-sizing: border-box;
  justify-content: center;
  border: 1px solid #26a0da;
  border-bottom: 0;
  background: #cce8f6;
}
.watermark {
  position: absolute;
  right: 10px;
  bottom: 4px;
  color: #8f8f8f;
  font-size: 13px;
}

.upload {
  position: absolute;
  top: 40px;
  right: 100px;
  width: 160px;
  height: 40px;
  box-sizing: border-box;
  overflow: hidden;
  border: 1px solid #16a3ff;
  border-radius: 9px;
  background: #eef8ff;
  color: #1b9ff5;
}
.cloud {
  display: flex;
  align-items: center;
  justify-content: center;
  width: 44px;
  height: 40px;
  background: linear-gradient(135deg, #06a7ff, #0b84ff);
}
.upload-text {
  margin-left: 15px;
}
</style>
